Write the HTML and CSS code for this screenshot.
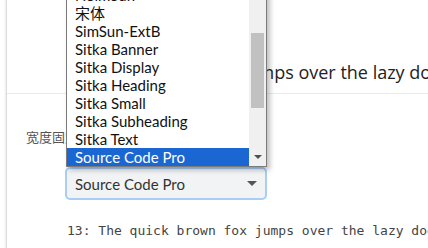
FILE: index.html
```html
<!DOCTYPE html>
<html lang="zh-CN">
<head>
<meta charset="UTF-8">
<meta name="viewport" content="width=device-width, initial-scale=1.0">
<title>字体设置</title>
<link rel="stylesheet" href="styles.css">
</head>
<body>

<div class="panel">
  <div class="preview">
    <p class="preview-text">The quick brown fox jumps over the lazy dog</p>
  </div>
  <div class="settings">
    <div class="label">宽度固定字体</div>
    <div class="field">
      <div class="select-wrap">
        <div class="select-box">
          <span>Source Code Pro</span>
          <span class="caret"></span>
        </div>
        <div class="dropdown">
          <ul class="options">
            <li>NSimSun</li>
            <li>宋体</li>
            <li>SimSun-ExtB</li>
            <li>Sitka Banner</li>
            <li>Sitka Display</li>
            <li>Sitka Heading</li>
            <li>Sitka Small</li>
            <li>Sitka Subheading</li>
            <li>Sitka Text</li>
            <li class="selected">Source Code Pro</li>
          </ul>
          <div class="scrollbar">
            <div class="thumb"></div>
            <div class="scroll-down"></div>
          </div>
        </div>
      </div>
      <p class="mono-sample">13: The quick brown fox jumps over the lazy dog</p>
    </div>
  </div>
</div>

</body>
</html>
```

FILE: styles.css
```css
body {
  margin: 0;
  padding: 0;
  background-color: #fff;
  font-family: "Lato", "Noto Sans CJK SC", sans-serif;
  overflow: hidden;
}
.panel {
  margin-left: 6px;
  height: 248px;
  border-left: 1px solid #dcdcdc;
  box-shadow: -1px 0 2px rgba(0, 0, 0, 0.08);
}
.preview {
  height: 93px;
  border-bottom: 1px solid #ebebeb;
}
.preview-text {
  margin: 0;
  padding: 59px 0 0 60px;
  font-family: "Open Sans", sans-serif;
  font-size: 18px;
  line-height: 26px;
  color: #222;
  white-space: nowrap;
}
.settings {
  padding: 34px 0 0 19px;
}
.label {
  font-family: "Noto Sans CJK SC", sans-serif;
  font-size: 13px;
  line-height: 17px;
  color: #555;
  white-space: nowrap;
}
.field {
  margin: 22px 0 0 39px;
}
.select-wrap {
  position: relative;
  width: 202px;
}
.select-box {
  display: flex;
  align-items: center;
  justify-content: space-between;
  height: 29px;
  padding: 0 8px 0 8px;
  border: 2px solid #a8cdf7;
  border-radius: 5px;
  background-color: #f1f3f5;
  font-size: 15px;
  color: #333;
}
.caret {
  width: 0;
  height: 0;
  border-left: 5px solid transparent;
  border-right: 5px solid transparent;
  border-top: 5px solid #555;
}
.dropdown {
  position: absolute;
  left: 1px;
  bottom: 100%;
  width: 199px;
  height: 180px;
  display: flex;
  border: 1px solid #7a7a7a;
  background-color: #fff;
  box-shadow: 3px 3px 5px rgba(0, 0, 0, 0.25);
}
.options {
  flex: 1;
  margin: 0;
  padding: 0;
  list-style: none;
  font-size: 15px;
  color: #111;
}
.options li {
  height: 18px;
  line-height: 18px;
  padding-left: 8px;
  white-space: nowrap;
}
.options li.selected {
  background-color: #1a66d2;
  color: #fff;
}
.scrollbar {
  position: relative;
  width: 17px;
  background-color: #f0f0f0;
}
.thumb {
  position: absolute;
  left: 2px;
  right: 2px;
  top: 47px;
  height: 75px;
  background-color: #c1c1c1;
}
.scroll-down {
  position: absolute;
  left: 5px;
  bottom: 7px;
  width: 0;
  height: 0;
  border-left: 4px solid transparent;
  border-right: 4px solid transparent;
  border-top: 4px solid #505050;
}
.mono-sample {
  margin: 23px 0 0 2px;
  font-family: "DejaVu Sans Mono", monospace;
  font-size: 13px;
  line-height: 16px;
  color: #444;
  white-space: nowrap;
}
```
